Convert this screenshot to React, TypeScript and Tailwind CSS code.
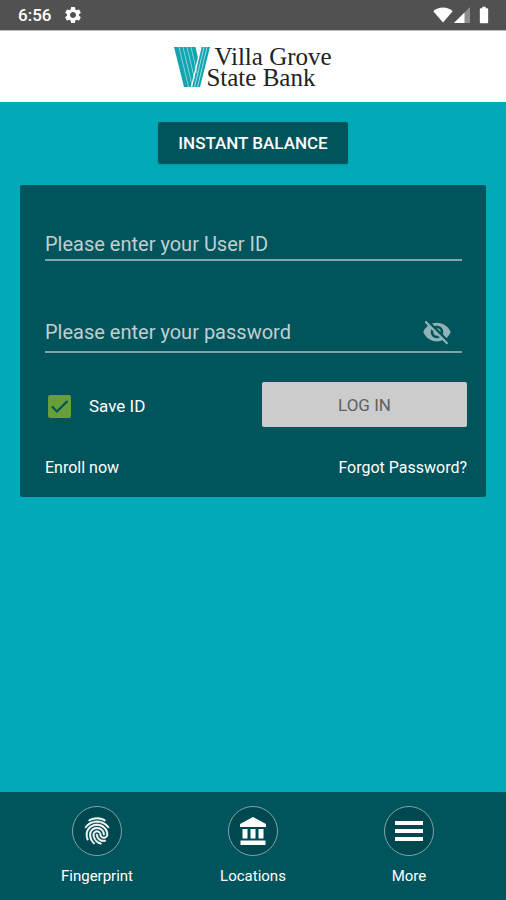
import React, { useState } from 'react';
import { MdBatteryFull, MdFingerprint, MdSettings, MdVisibility, MdVisibilityOff } from 'react-icons/md';

const StatusBar: React.FC = () => (
  <div className="flex h-[30px] items-center justify-between bg-[#515151] pl-[18px] pr-3 text-white">
    <div className="flex items-center gap-3">
      <span className="text-[17px] font-medium leading-5">6:56</span>
      <MdSettings className="size-5" />
    </div>
    <div className="flex items-center">
      <svg viewBox="0 0 20 16" className="h-4 w-5" fill="currentColor" aria-hidden="true">
        <path d="M10 15.5 0.3 4.2C3 1.8 6.3.6 10 .6s7 1.2 9.7 3.6z" />
      </svg>
      <svg viewBox="0 0 16 16" className="ml-px size-4" fill="currentColor" aria-hidden="true">
        <path d="M16 0v16H0z" opacity="0.35" />
        <path d="M10.5 5.5V16H0z" />
      </svg>
      <MdBatteryFull className="ml-1 size-5" />
    </div>
  </div>
);

const Logo: React.FC = () => (
  <div className="flex items-center">
    <svg viewBox="0 0 36 40" className="h-10 w-9" aria-hidden="true">
      <path d="M0 0h36L26 40H10z" fill="#12a5b0" />
      {/* white lines between the bars of the left arm */}
      <g stroke="#d5f1f3" strokeWidth="0.6" fill="none">
        <path d="M5 0l9.5 40" />
        <path d="M9 0l9 38" />
        <path d="M13 0l7.5 32" />
        <path d="M17 0l6 26" />
      </g>
      {/* right arm crossing over */}
      <g stroke="#fff" fill="none">
        <path d="M27 0 17.5 40" strokeWidth="1.3" />
        <path d="M30 0 20.5 40" strokeWidth="0.6" />
        <path d="M33 0 23.5 40" strokeWidth="0.6" />
      </g>
      <path d="M21.5 0h5L24 11z" fill="#fff" />
    </svg>
    <div className="-ml-1 font-['Liberation_Serif',serif] text-[25px] leading-[21px] text-[#222]">
      <p className="pl-2">Villa Grove</p>
      <p>State Bank</p>
    </div>
  </div>
);

const BankIcon: React.FC = () => (
  <svg viewBox="0 0 26 28" className="h-7 w-[26px]" fill="currentColor" aria-hidden="true">
    <path d="M13 0 26 7v3H0V7zM2.5 12h5v9.5h-5zM10.5 12h5v9.5h-5zM18.5 12h5v9.5h-5zM.5 23.5h25V28H.5z" />
  </svg>
);

const MenuLines: React.FC = () => (
  <svg viewBox="0 0 28 20" className="h-5 w-7" fill="currentColor" aria-hidden="true">
    <path d="M0 0h28v4H0zM0 8h28v4H0zM0 16h28v4H0z" />
  </svg>
);

const navItems = [
  { label: 'Fingerprint', icon: <MdFingerprint className="size-8 [&>path:last-child]:[stroke-width:0.5]" /> },
  { label: 'Locations', icon: <BankIcon /> },
  { label: 'More', icon: <MenuLines /> },
];

const App: React.FC = () => {
  const [userId, setUserId] = useState('');
  const [password, setPassword] = useState('');
  const [showPassword, setShowPassword] = useState(false);
  const [saveId, setSaveId] = useState(true);

  return (
    <div className="flex min-h-screen flex-col bg-[#00aab8] font-[Roboto,sans-serif] text-white">
      <StatusBar />
      <header className="flex h-[72px] items-center justify-center border-t border-[#bdbdbd] bg-white">
        <Logo />
      </header>

      <main className="flex flex-1 flex-col items-center px-5 pt-5">
        <button className="h-[42px] rounded-xs bg-[#00545b] px-5 pt-0.5 text-[17px] font-medium shadow-sm">
          INSTANT BALANCE
        </button>

        <form
          className="mt-[21px] w-full rounded-xs bg-[#00545b] pb-[18px] pl-[25px] pr-[19px] pt-[42px]"
          onSubmit={(e) => e.preventDefault()}
        >
          <div className="mr-[5px] border-b-2 border-[#7fa6aa]">
            <input
              type="text"
              aria-label="User ID"
              placeholder="Please enter your User ID"
              value={userId}
              onChange={(e) => setUserId(e.target.value)}
              className="block h-8 w-full bg-transparent pt-0.5 text-[20px] outline-none placeholder:text-[#c0cfd1]"
            />
          </div>

          <div className="mr-[5px] mt-[54px] flex items-center border-b-2 border-[#7fa6aa] pb-1">
            <input
              type={showPassword ? 'text' : 'password'}
              aria-label="Password"
              placeholder="Please enter your password"
              value={password}
              onChange={(e) => setPassword(e.target.value)}
              className="block h-8 min-w-0 flex-1 bg-transparent pt-0.5 text-[20px] outline-none placeholder:text-[#c0cfd1]"
            />
            <button
              type="button"
              aria-label="Show password"
              className="mr-2.5 pt-0.5 text-[#8fb3b6]"
              onClick={() => setShowPassword(!showPassword)}
            >
              {showPassword ? <MdVisibility className="size-[30px]" /> : <MdVisibilityOff className="size-[30px]" />}
            </button>
          </div>

          <div className="mt-[29px] flex items-end justify-between">
            <label className="flex items-center gap-[18px] pb-2 pl-[3px] text-[17px]">
              <span className="grid size-[23px]">
                <input
                  type="checkbox"
                  checked={saveId}
                  onChange={(e) => setSaveId(e.target.checked)}
                  className="col-start-1 row-start-1 size-[23px] appearance-none rounded-xs border-2 border-[#689f38] checked:bg-[#689f38]"
                />
                {saveId && (
                  <svg
                    viewBox="0 0 23 23"
                    className="pointer-events-none col-start-1 row-start-1"
                    fill="none"
                    stroke="#00545b"
                    strokeWidth="2.2"
                    aria-hidden="true"
                  >
                    <path d="M4 11.5l5 5L19.5 6" />
                  </svg>
                )}
              </span>
              Save ID
            </label>
            <button className="h-[45px] w-[205px] rounded-xs bg-[#cccccc] pt-0.5 text-[17px] text-[#5f5f5f]">
              LOG IN
            </button>
          </div>

          <div className="mt-[30px] flex justify-between text-base leading-[22px]">
            <a href="#enroll">Enroll now</a>
            <a href="#forgot">Forgot Password?</a>
          </div>
        </form>
      </main>

      <nav className="grid h-[108px] grid-cols-3 bg-[#00545b] px-[19px] pt-3.5">
        {navItems.map((item) => (
          <a key={item.label} href={`#${item.label.toLowerCase()}`} className="flex flex-col items-center gap-2.5">
            <span className="flex size-[50px] items-center justify-center rounded-full border border-[#7fa6aa] bg-[#00484f]">
              {item.icon}
            </span>
            <span className="text-[15px] leading-5">{item.label}</span>
          </a>
        ))}
      </nav>
    </div>
  );
};

export default App;
